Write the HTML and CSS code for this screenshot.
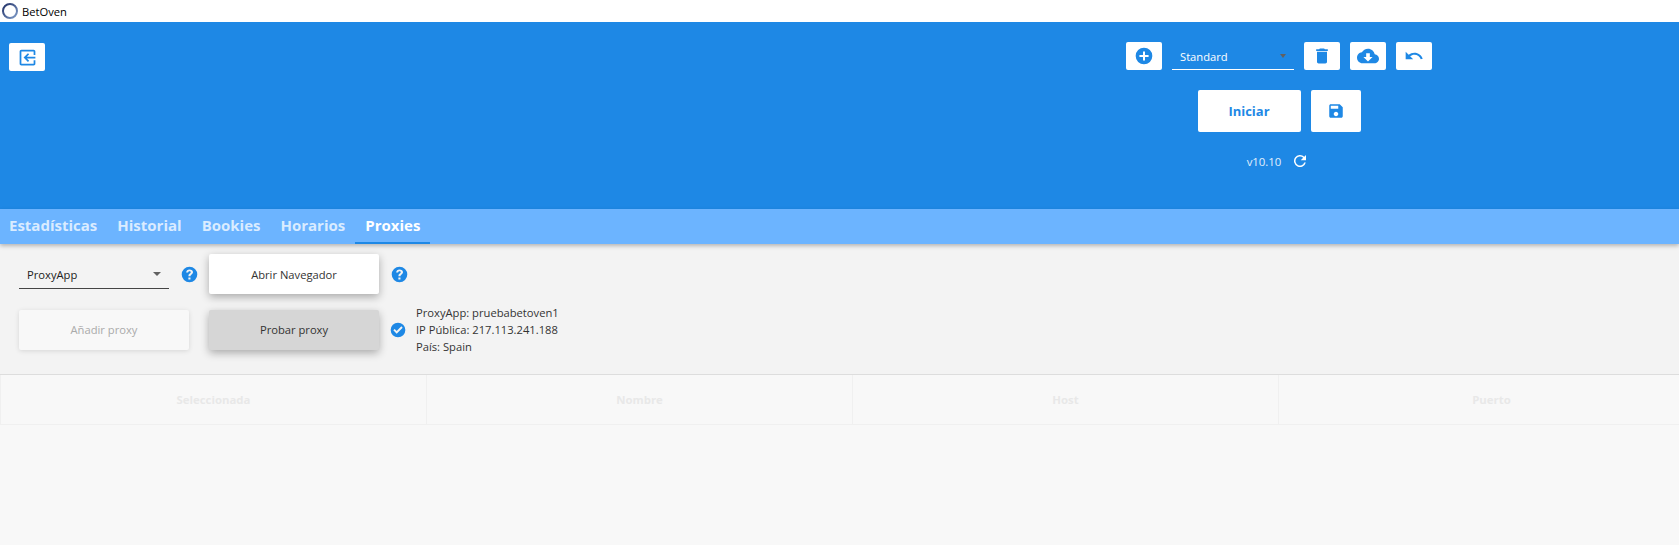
FILE: index.html
```html
<!DOCTYPE html>
<html lang="es">
<head>
<meta charset="utf-8">
<title>BetOven</title>
<link rel="stylesheet" href="styles.css">
</head>
<body>
<div class="titlebar">
  <svg class="logo" viewBox="0 0 16 16"><defs><linearGradient id="ring" x1="0" y1="0" x2="1" y2="1"><stop offset="0" stop-color="#1f2f66"/><stop offset="1" stop-color="#7f9cc9"/></linearGradient></defs><circle cx="8" cy="8" r="7" fill="none" stroke="url(#ring)" stroke-width="2"/></svg>
  <span class="app-name">BetOven</span>
</div>
<header class="hero">
  <div class="hero-left">
    <button class="btn-white btn-icon"><svg class="ico ico-exit" viewBox="0 0 24 24"><path d="M10.090 15.590L11.500 17l5-5-5-5-1.410 1.410L12.670 11H3v2h9.670l-2.580 2.590zM19 3H5c-1.110 0-2 .9-2 2v4h2V5h14v14H5v-4H3v4c0 1.100.89 2 2 2h14c1.100 0 2-.9 2-2V5c0-1.100-.9-2-2-2z"/></svg></button>
  </div>
  <div class="hero-right">
    <div class="row-profile">
      <button class="btn-white btn-icon"><svg class="ico ico-lg" viewBox="0 0 24 24"><path d="M12 2a10 10 0 1 0 0 20 10 10 0 0 0 0-20zm5.500 11.200h-4.300v4.300h-2.400v-4.300H6.500v-2.400h4.300V6.500h2.400v4.300h4.300z"/></svg></button>
      <div class="select select-light"><span>Standard</span><i class="caret caret-grey"></i></div>
      <button class="btn-white btn-icon"><svg class="ico ico-lg" viewBox="0 0 24 24"><path d="M6 19c0 1.100.9 2 2 2h8c1.100 0 2-.9 2-2V7H6v12zM19 4h-3.500l-1-1h-5l-1 1H5v2h14V4z"/></svg></button>
      <button class="btn-white btn-icon"><svg class="ico ico-cloud" viewBox="0 0 24 24"><path d="M19.350 10.040C18.670 6.590 15.640 4 12 4 9.110 4 6.600 5.640 5.350 8.040 2.340 8.360 0 10.910 0 14c0 3.310 2.690 6 6 6h13c2.760 0 5-2.240 5-5 0-2.640-2.050-4.780-4.650-4.960zM17 13l-5 5-5-5h3V9h4v4h3z"/></svg></button>
      <button class="btn-white btn-icon"><svg class="ico ico-lg" viewBox="0 0 24 24"><path d="M12.500 8c-2.650 0-5.050.99-6.900 2.600L2 7v9h9l-3.620-3.620c1.390-1.160 3.160-1.880 5.120-1.880 3.540 0 6.550 2.310 7.600 5.500l2.370-.78C21.080 11.030 17.150 8 12.500 8z"/></svg></button>
    </div>
    <div class="row-actions">
      <button class="btn-white btn-start">Iniciar</button>
      <button class="btn-white btn-save"><svg class="ico" viewBox="0 0 24 24"><path d="M17 3H5c-1.110 0-2 .9-2 2v14c0 1.100.89 2 2 2h14c1.100 0 2-.9 2-2V7l-4-4zm-5 16c-1.660 0-3-1.340-3-3s1.340-3 3-3 3 1.340 3 3-1.340 3-3 3zm3-10H5V5h10v4z"/></svg></button>
    </div>
    <div class="row-version">
      <span>v10.10</span>
      <svg class="ico-refresh" viewBox="0 0 24 24"><path d="M17.650 6.350A8 8 0 1 0 19.750 14h-2.100a6 6 0 1 1-1.410-6.240L13 11h7V4z"/></svg>
    </div>
  </div>
</header>
<nav class="tabs">
  <a class="tab">Estadísticas</a>
  <a class="tab">Historial</a>
  <a class="tab">Bookies</a>
  <a class="tab">Horarios</a>
  <a class="tab tab-active">Proxies</a>
</nav>
<main class="panel">
  <div class="controls">
    <div class="select select-dark"><span>ProxyApp</span><i class="caret"></i></div>
    <svg class="help" viewBox="0 0 24 24"><path d="M12 1a11 11 0 1 0 0 22 11 11 0 0 0 0-22zm1.400 18h-3v-2.800h3zm2.900-8.300c-.5.700-1 1.100-1.600 1.500-.9.600-1.300 1.100-1.300 2.300h-2.900c0-2 .6-3 1.900-3.900.8-.6 1.400-1 1.400-1.800 0-.8-.7-1.300-1.700-1.300-1.100 0-1.900.6-2 1.800H7.300C7.500 6.700 9.300 5 12 5c2.900 0 4.900 1.500 4.900 3.700 0 .8-.2 1.400-.6 2z"/></svg>
    <button class="btn-raised btn-open">Abrir Navegador</button>
    <svg class="help" viewBox="0 0 24 24"><path d="M12 1a11 11 0 1 0 0 22 11 11 0 0 0 0-22zm1.400 18h-3v-2.800h3zm2.900-8.300c-.5.700-1 1.100-1.600 1.500-.9.600-1.300 1.100-1.300 2.300h-2.900c0-2 .6-3 1.900-3.900.8-.6 1.400-1 1.400-1.800 0-.8-.7-1.300-1.700-1.300-1.100 0-1.900.6-2 1.800H7.300C7.500 6.700 9.300 5 12 5c2.900 0 4.900 1.500 4.900 3.700 0 .8-.2 1.400-.6 2z"/></svg>
  </div>
  <div class="controls-second">
    <button class="btn-raised btn-disabled">Añadir proxy</button>
    <button class="btn-raised btn-focus">Probar proxy</button>
    <svg class="check" viewBox="0 0 24 24"><path d="M12 1a11 11 0 1 0 0 22 11 11 0 0 0 0-22zm-2 16.500l-5-5 2-2 3 3 7-7 2 2z"/></svg>
    <div class="proxy-info">
      <div>ProxyApp: pruebabetoven1</div>
      <div>IP Pública: 217.113.241.188</div>
      <div>País: Spain</div>
    </div>
  </div>
</main>
<section class="table-area">
  <div class="table-head">
    <div class="th">Seleccionada</div>
    <div class="th">Nombre</div>
    <div class="th">Host</div>
    <div class="th">Puerto</div>
  </div>
</section>
</body>
</html>
```
FILE: styles.css
```css
* { box-sizing: border-box; }
html, body { margin: 0; height: 100%; }
body {
  width: 1679px;
  height: 545px;
  overflow: hidden;
  font-family: "Open Sans", Roboto, sans-serif;
  background: #f8f8f8;
  display: flex;
  flex-direction: column;
}
button { font-family: inherit; border: 0; padding: 0; cursor: pointer; }

.titlebar {
  height: 22px;
  background: #fff;
  display: flex;
  align-items: center;
  padding-left: 2px;
  gap: 4px;
}
.logo { width: 16px; height: 16px; }
.app-name { font-size: 11.200px; color: #000; }

.hero {
  height: 187px;
  background: #1e88e5;
  display: grid;
  grid-template-columns: 1fr 800px;
}
.hero-left { padding: 21px 0 0 9px; }
.hero-right {
  padding-top: 20px;
  display: flex;
  flex-direction: column;
  align-items: center;
}
.btn-white {
  background: #fff;
  border-radius: 2px;
  color: #1e88e5;
  display: flex;
  align-items: center;
  justify-content: center;
}
.btn-icon { width: 36px; height: 28px; }
.ico { width: 18px; height: 18px; fill: #1e88e5; }
.ico-exit { width: 21px; height: 21px; transform: scaleX(-1); }
.ico-lg { width: 20px; height: 20px; }
.ico-cloud { width: 22px; height: 22px; }

.row-profile { display: flex; align-items: center; gap: 10px; }
.select {
  display: flex;
  align-items: center;
  justify-content: space-between;
  font-size: 11.200px;
}
.select-light {
  width: 122px;
  height: 28px;
  padding: 1px 8px 0;
  color: #fff;
  border-bottom: 1px solid #fff;
}
.select-dark {
  width: 150px;
  height: 30px;
  padding: 1px 8px 0;
  color: #212121;
  border-bottom: 1px solid #444;
}
.caret {
  width: 0;
  height: 0;
  border-left: 4px solid transparent;
  border-right: 4px solid transparent;
  border-top: 4px solid #616161;
}
.caret-grey { border-left-width: 3.500px; border-right-width: 3.500px; }

.row-actions { display: flex; gap: 10px; margin-top: 20px; }
.btn-start { width: 103px; height: 42px; font-size: 13px; font-weight: 700; }
.btn-save { width: 50px; height: 42px; }
.row-version {
  display: flex;
  align-items: center;
  gap: 10px;
  margin-top: 20px;
  padding-right: 2px;
  height: 18px;
  color: #e3f0fc;
  font-size: 11.400px;
}
.ico-refresh { width: 18px; height: 18px; fill: #fff; }

.tabs {
  height: 35px;
  background: #6cb4ff;
  display: flex;
  box-shadow: 0 2px 4px rgba(0, 0, 0, .25);
  position: relative;
}
.tab {
  padding: 0 10px;
  font-size: 15px;
  font-weight: 700;
  line-height: 33px;
  color: rgba(255, 255, 255, .75);
}
.tabs .tab:first-child { padding-left: 9px; }
.tab-active { color: #fff; border-bottom: 2px solid #1e88e5; }

.panel {
  height: 131px;
  background: #f3f3f3;
  padding: 10px 0 0 19px;
  border-bottom: 1px solid #ddd;
}
.controls { display: flex; align-items: center; }
.controls .help:first-of-type { margin-left: 12px; }
.help { width: 17px; height: 17px; fill: #1e88e5; flex: none; }
.btn-raised {
  width: 170px;
  height: 40px;
  border-radius: 2px;
  font-size: 11.200px;
  color: #333;
  background: #fff;
  box-shadow: 0 3px 8px rgba(0, 0, 0, .3);
}
.btn-open { margin: 0 12px 0 11px; }
.controls-second { display: flex; align-items: center; margin-top: 10px; }
.btn-disabled {
  background: #f8f8f8;
  color: #aaa;
  box-shadow: 0 1px 5px rgba(0, 0, 0, .12);
  margin-right: 20px;
}
.btn-focus { background: #d6d6d6; }
.check { width: 16px; height: 16px; fill: #1e88e5; margin-left: 11px; flex: none; }
.proxy-info {
  margin-left: 10px;
  font-size: 11.200px;
  line-height: 17px;
  color: #333;
}

.table-area { flex: 1; background: #f8f8f8; }
.table-head {
  height: 50px;
  display: grid;
  grid-template-columns: repeat(4, 426px);
  border-bottom: 1px solid #f0f0f0;
}
.th {
  display: flex;
  align-items: center;
  justify-content: center;
  font-size: 11.400px;
  font-weight: 700;
  color: #e8e8e8;
  border-left: 1px solid #f0f0f0;
}
```
